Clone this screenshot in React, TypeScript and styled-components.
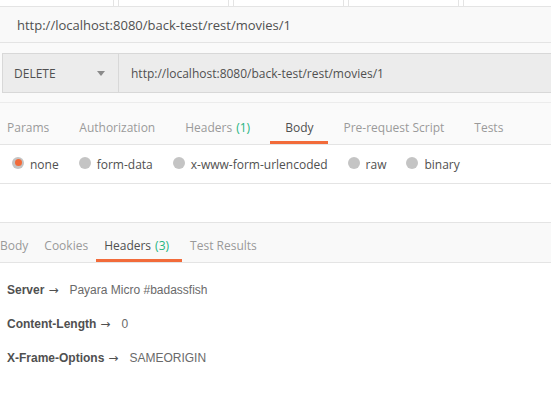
import React from 'react'
import styled, { createGlobalStyle } from 'styled-components'

const GlobalStyle = createGlobalStyle`
  html, body {
    margin: 0;
    padding: 0;
    background: #ffffff;
    overflow: hidden;
  }
  * { box-sizing: border-box; }
`

const Page = styled.div`
  width: 551px;
  height: 408px;
  overflow: hidden;
  font-family: "Open Sans", "Noto Sans", sans-serif;
  color: #505050;
  background: #ffffff;
`

/* tab strip above, cut off at the top edge */
const TopStrip = styled.div`
  display: flex;
  gap: 4px;
  height: 7px;
  padding-left: 3px;
  border-bottom: 1px solid #e4e4e4;
  background: #ffffff;
`

const TopTab = styled.div`
  flex: 0 0 111px;
  border-left: 1px solid #e4e4e4;
  border-right: 1px solid #e4e4e4;

  &:first-child {
    border-left: none;
  }
`

const TitleBar = styled.div`
  display: flex;
  align-items: center;
  height: 36px;
  padding-left: 17px;
  background: #f9f9f9;
  border-bottom: 1px solid #e4e4e4;
  font-size: 13px;
  color: #505050;
`

const RequestArea = styled.div`
  background: #fafafa;
  padding: 10px 0 0 2px;
  border-bottom: 1px solid #ececec;
`

const UrlBar = styled.div`
  display: flex;
  height: 40px;
  background: #ececec;
  border: 1px solid #d8d8d8;
  border-right: none;
`

const MethodSelect = styled.div`
  display: flex;
  align-items: center;
  justify-content: space-between;
  width: 116px;
  padding: 0 13px 0 11px;
  border-right: 1px solid #d8d8d8;
  font-size: 12px;
  color: #505050;
`

const Caret = styled.span`
  width: 0;
  height: 0;
  border-left: 4px solid transparent;
  border-right: 4px solid transparent;
  border-top: 5px solid #8a8a8a;
`

const UrlInput = styled.div`
  display: flex;
  align-items: center;
  padding-left: 12px;
  font-size: 12px;
  color: #505050;
`

const Spacer = styled.div<{ h: number }>`
  height: ${(p) => p.h}px;
`

const TabRow = styled.div<{ h: number; bg: string; top?: boolean }>`
  display: flex;
  height: ${(p) => p.h}px;
  background: ${(p) => p.bg};
  border-top: ${(p) => (p.top ? '1px solid #e4e4e4' : 'none')};
  border-bottom: 1px solid #e4e4e4;
  overflow: hidden;
`

const TabList = styled.div`
  display: flex;
  margin-left: -8px;
`

const Tab = styled.div<{ active?: boolean; pad: number; padTop: number }>`
  display: flex;
  align-items: center;
  padding: ${(p) => p.padTop}px ${(p) => p.pad}px 0;
  font-size: 12px;
  color: ${(p) => (p.active ? '#505050' : '#9a9a9a')};
  border-bottom: 3px solid ${(p) => (p.active ? '#f26b3a' : 'transparent')};
  white-space: nowrap;
`

const Count = styled.span`
  margin: 0 5px 0 4px;
  color: #26b47f;
`

const RadioRow = styled.div`
  display: flex;
  align-items: center;
  gap: 20px;
  height: 39px;
  padding-left: 12px;
  border-bottom: 1px solid #e4e4e4;
  background: #ffffff;
`

const RadioOption = styled.label`
  display: flex;
  align-items: center;
  gap: 6px;
  font-size: 12px;
  color: #505050;
`

const RadioDot = styled.span<{ checked?: boolean }>`
  display: inline-flex;
  align-items: center;
  justify-content: center;
  width: 12px;
  height: 12px;
  border-radius: 50%;
  background: #c4c4c4;
  margin-top: -3px;

  &::after {
    content: '';
    width: 7px;
    height: 7px;
    border-radius: 50%;
    background: ${(p) => (p.checked ? '#f26b3a' : 'transparent')};
  }
`

const HeaderList = styled.div`
  display: flex;
  flex-direction: column;
  gap: 19px;
  padding: 20px 0 0 7px;
  font-family: "Liberation Sans", Arial, sans-serif;
  font-size: 12px;
`

const HeaderLine = styled.div`
  display: flex;
  align-items: baseline;
  gap: 11px;
  line-height: 15px;
`

const HeaderKey = styled.span`
  font-weight: bold;
  color: #505050;
`

const Arrow = styled.span`
  font-family: "DejaVu Sans", sans-serif;
  font-weight: normal;
  font-size: 12px;
  margin-left: 4px;
`

const HeaderValue = styled.span`
  color: #6a6a6a;
`

const requestTabs = [
  { label: 'Params' },
  { label: 'Authorization' },
  { label: 'Headers', count: 1 },
  { label: 'Body', active: true },
  { label: 'Pre-request Script' },
  { label: 'Tests' },
]

const responseTabs = [
  { label: 'Body' },
  { label: 'Cookies' },
  { label: 'Headers', count: 3, active: true },
  { label: 'Test Results' },
]

const bodyModes = ['none', 'form-data', 'x-www-form-urlencoded', 'raw', 'binary']

const headers = [
  { key: 'Server', value: 'Payara Micro #badassfish' },
  { key: 'Content-Length', value: '0' },
  { key: 'X-Frame-Options', value: 'SAMEORIGIN' },
]

const url = 'http://localhost:8080/back-test/rest/movies/1'

const App = () => {
  return (
    <Page>
      <GlobalStyle />
      <TopStrip>
        {[0, 1, 2, 3, 4].map((i) => (
          <TopTab key={i} />
        ))}
      </TopStrip>
      <TitleBar>{url}</TitleBar>

      <RequestArea>
        <UrlBar>
          <MethodSelect>
            DELETE
            <Caret />
          </MethodSelect>
          <UrlInput>{url}</UrlInput>
        </UrlBar>
        <Spacer h={9} />
      </RequestArea>

      <TabRow h={42} bg="#fafafa">
        <TabList>
          {requestTabs.map((t) => (
            <Tab key={t.label} active={t.active} pad={15} padTop={10}>
              {t.label}
              {t.count !== undefined && <Count>({t.count})</Count>}
            </Tab>
          ))}
        </TabList>
      </TabRow>

      <RadioRow>
        {bodyModes.map((m, i) => (
          <RadioOption key={m}>
            <RadioDot checked={i === 0} />
            {m}
          </RadioOption>
        ))}
      </RadioRow>

      <Spacer h={38} />

      <TabRow h={41} bg="#f9f9f9" top>
        <TabList>
          {responseTabs.map((t) => (
            <Tab key={t.label} active={t.active} pad={8} padTop={8}>
              {t.label}
              {t.count !== undefined && <Count>({t.count})</Count>}
            </Tab>
          ))}
        </TabList>
      </TabRow>

      <HeaderList>
        {headers.map((h) => (
          <HeaderLine key={h.key}>
            <HeaderKey>
              {h.key}
              <Arrow>→</Arrow>
            </HeaderKey>
            <HeaderValue>{h.value}</HeaderValue>
          </HeaderLine>
        ))}
      </HeaderList>
    </Page>
  )
}

export default App
